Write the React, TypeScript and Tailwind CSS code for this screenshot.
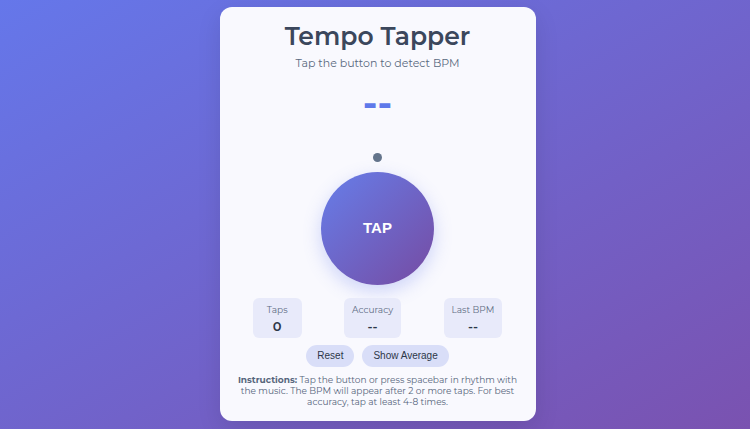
import { useEffect, useState } from "react";

interface StatProps {
  label: string;
  value: string | number;
}

function Stat({ label, value }: StatProps) {
  return (
    <div className="min-w-[49px] rounded-md bg-[#e8eafa] px-2 py-1 text-center">
      <div className="text-[9px] leading-4 text-[#5f6d84]">{label}</div>
      <div className="text-[13px] leading-4 font-semibold text-[#2d3748]">{value}</div>
    </div>
  );
}

function toBpm(times: number[]) {
  if (times.length < 2) return null;
  const span = times[times.length - 1] - times[0];
  return Math.round((60000 * (times.length - 1)) / span);
}

export default function App() {
  const [taps, setTaps] = useState<number[]>([]);
  const [showAverage, setShowAverage] = useState(false);

  const tap = () => setTaps((prev) => [...prev, performance.now()]);

  // spacebar works like the button
  useEffect(() => {
    const onKey = (e: KeyboardEvent) => {
      if (e.code === "Space") {
        e.preventDefault();
        tap();
      }
    };
    window.addEventListener("keydown", onKey);
    return () => window.removeEventListener("keydown", onKey);
  }, []);

  const average = toBpm(taps);
  const last = toBpm(taps.slice(-2));
  const accuracy =
    average && last ? `${Math.max(0, 100 - Math.abs(average - last))}%` : "--";

  return (
    <div className="flex min-h-screen items-center justify-center bg-linear-to-br/srgb from-[#6577ea] to-[#7a52b0] pb-[2px] pl-[5px] font-['Montserrat','Inter',sans-serif]">
      <main className="w-full max-w-[316px] rounded-xl bg-[#f9f9fe] px-3 pt-[11px] pb-[14px] text-center shadow-[0_8px_24px_rgba(0,0,0,0.1)]">
        <h1 className="text-[25px] leading-9 font-semibold text-[#3b475c]">Tempo Tapper</h1>
        <p className="text-[11px] leading-[18px] text-[#5a6980]">Tap the button to detect BPM</p>

        {/* BPM display */}
        <div className="mt-2 text-[38px] leading-[46px] font-bold text-[#5f79ea]">
          {(showAverage ? average : last) ?? "--"}
        </div>

        {/* beat dot */}
        <div className="mx-auto mt-[27px] size-[9px] rounded-full bg-[#64748b]" />

        <button
          type="button"
          onClick={tap}
          className="mt-[10px] size-[113px] rounded-full bg-linear-135/srgb from-[#667eea] to-[#764ba2] font-['Liberation_Sans',sans-serif] text-[15px] font-bold text-white shadow-[0_6px_18px_rgba(102,126,234,0.3)]"
        >
          TAP
        </button>

        <div className="mt-[13px] flex justify-around">
          <Stat label="Taps" value={taps.length} />
          <Stat label="Accuracy" value={accuracy} />
          <Stat label="Last BPM" value={last ?? "--"} />
        </div>

        <div className="mt-[7px] flex justify-center gap-2 font-['Liberation_Sans',sans-serif] text-[10px] text-[#2d3748]">
          <button
            type="button"
            onClick={() => setTaps([])}
            className="h-[22px] rounded-full bg-[#d9def8] px-[11px]"
          >
            Reset
          </button>
          <button
            type="button"
            onClick={() => setShowAverage(!showAverage)}
            className="h-[22px] rounded-full bg-[#d9def8] px-[11px]"
          >
            Show Average
          </button>
        </div>

        <p className="mt-[7px] text-[9px] leading-[11px] text-[#56657c]">
          <strong className="font-bold">Instructions:</strong> Tap the button or press spacebar in
          rhythm with the music. The BPM will appear after 2 or more taps. For best accuracy, tap at
          least 4-8 times.
        </p>
      </main>
    </div>
  );
}
